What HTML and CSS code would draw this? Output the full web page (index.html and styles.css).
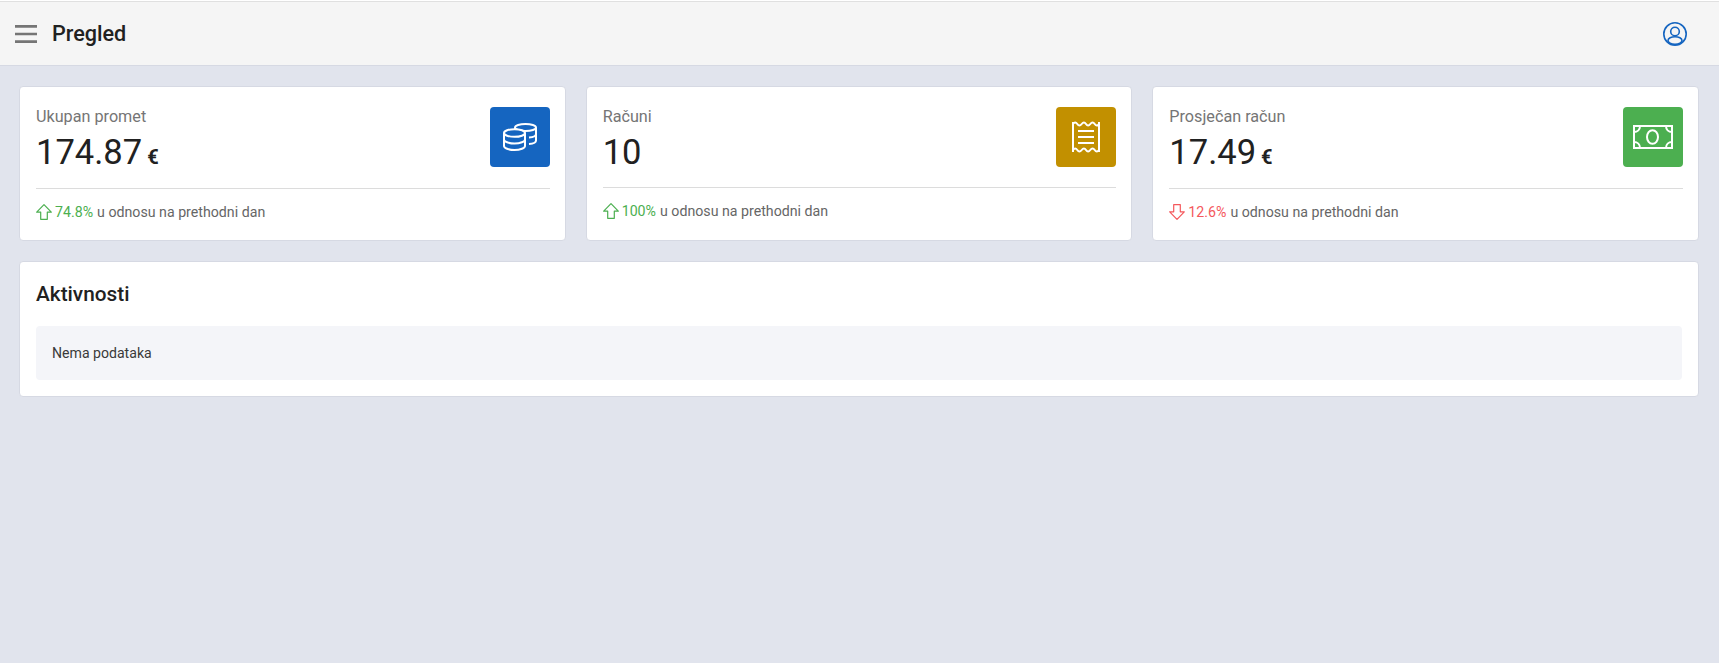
FILE: index.html
```html
<!DOCTYPE html>
<html lang="hr">
<head>
<meta charset="utf-8">
<title>Pregled</title>
<link rel="stylesheet" href="styles.css">
</head>
<body>
<header class="topbar">
  <div class="topbar-left">
    <svg class="menu-icon" width="22" height="18" viewBox="0 0 22 18"><path d="M0 1.400h22M0 9h22M0 16.600h22" stroke="#757575" stroke-width="2.700" fill="none"/></svg>
    <h1 class="title">Pregled</h1>
  </div>
  <svg class="user-icon" width="24" height="24" viewBox="0 0 24 24" fill="none" stroke="#1565c0" stroke-width="1.600"><circle cx="12" cy="12" r="11.200"/><circle cx="12" cy="9.500" r="4.300"/><ellipse cx="12" cy="18.500" rx="7" ry="3.800"/></svg>
</header>
<main class="content">
  <section class="stats">
    <article class="card stat">
      <div class="stat-head">
        <div class="stat-text">
          <div class="stat-label">Ukupan promet</div>
          <div class="stat-value">174.87<span class="unit"> €</span></div>
        </div>
        <div class="stat-icon blue">
          <svg width="34" height="28" viewBox="0 0 34 28" fill="none" stroke="#fff" stroke-width="2"><path d="M12 5v12M33 4.500v13c0 1.800-3 3.200-7 3.500M33 11c0 1.800-3 3.200-7 3.500"/><ellipse cx="22.500" cy="4.500" rx="10.500" ry="3.500"/><path fill="#1565c0" stroke="none" d="M1 10h21v14H1z"/><ellipse cx="11.500" cy="10" rx="10.500" ry="3.800" fill="#1565c0"/><path d="M1 10v13c0 2 4.700 4 10.500 4S22 25 22 23V10M1 16.500c0 2 4.700 4 10.500 4S22 18.500 22 16.500"/></svg>
        </div>
      </div>
      <div class="stat-foot">
        <svg class="arrow" width="16" height="16" viewBox="0 0 16 16" fill="none" stroke="#4caf50" stroke-width="1.200" stroke-linejoin="round"><path d="M8 .7 .7 8.200h4v7.100h6.600V8.200h4z"/></svg>
        <span class="up">74.8%</span> u odnosu na prethodni dan
      </div>
    </article>
    <article class="card stat">
      <div class="stat-head">
        <div class="stat-text">
          <div class="stat-label">Računi</div>
          <div class="stat-value">10</div>
        </div>
        <div class="stat-icon gold">
          <svg width="28" height="32" viewBox="0 0 28 32" fill="none" stroke="#fff" stroke-width="2"><path d="M1 1v30M27 1v30M1 3q2.200 -3 4.300 0t4.400 0 4.300 0 4.300 0 4.400 0 4.300 0M1 29q2.200 -3 4.300 0t4.400 0 4.300 0 4.300 0 4.400 0 4.300 0"/><path d="M6 10h16M6 16h16M6 22h16"/></svg>
        </div>
      </div>
      <div class="stat-foot">
        <svg class="arrow" width="16" height="16" viewBox="0 0 16 16" fill="none" stroke="#4caf50" stroke-width="1.200" stroke-linejoin="round"><path d="M8 .7 .7 8.200h4v7.100h6.600V8.200h4z"/></svg>
        <span class="up">100%</span> u odnosu na prethodni dan
      </div>
    </article>
    <article class="card stat">
      <div class="stat-head">
        <div class="stat-text">
          <div class="stat-label">Prosječan račun</div>
          <div class="stat-value">17.49<span class="unit"> €</span></div>
        </div>
        <div class="stat-icon green">
          <svg width="40" height="24" viewBox="0 0 40 24" fill="none" stroke="#fff" stroke-width="2"><rect x="1" y="1" width="38" height="22"/><ellipse cx="19.500" cy="12" rx="5.500" ry="6.800"/><path d="M1 7c3.500 0 6-2.500 6-6M39 7c-3.500 0-6-2.500-6-6M1 17c3.500 0 6 2.500 6 6M39 17c-3.500 0-6 2.500-6 6"/></svg>
        </div>
      </div>
      <div class="stat-foot">
        <svg class="arrow" width="16" height="16" viewBox="0 0 16 16" fill="none" stroke="#f4585c" stroke-width="1.200" stroke-linejoin="round"><path d="M8 15.300 .7 7.800h4V.7h6.600v7.100h4z"/></svg>
        <span class="down">12.6%</span> u odnosu na prethodni dan
      </div>
    </article>
  </section>
  <section class="card activity">
    <h2 class="activity-title">Aktivnosti</h2>
    <div class="empty">Nema podataka</div>
  </section>
</main>
</body>
</html>
```
FILE: styles.css
```css
* { box-sizing: border-box; }
html, body { margin: 0; height: 100%; }
body {
  background: #e1e4ed;
  font-family: Roboto, "Liberation Sans", sans-serif;
  color: #212121;
  overflow: hidden;
}
.topbar {
  height: 66px;
  background: #f5f5f5;
  border-top: 1px solid #fff;
  border-bottom: 1px solid #d6d9e3;
  box-shadow: inset 0 1px 0 #e0e0e0;
  display: flex;
  align-items: center;
  justify-content: space-between;
  padding: 1px 32px 0 15px;
}
.topbar-left { display: flex; align-items: center; gap: 15px; }
.menu-icon { display: block; }
.title { margin: 0; font-size: 21.600px; line-height: 24px; font-weight: 500; color: #212121; }
.user-icon { display: block; }
.content {
  padding: 20px 20px 20px 19px;
  display: flex;
  flex-direction: column;
  gap: 20px;
}
.stats { display: grid; grid-template-columns: repeat(3, 1fr); gap: 20px; }
.card {
  background: #fff;
  border: 1px solid #d6d9e3;
  border-radius: 4px;
}
.stat { padding: 20px 15px 0 16px; height: 155px; }
.stat-head {
  display: flex;
  justify-content: space-between;
  align-items: flex-start;
  padding-bottom: 16px;
  border-bottom: 1px solid #dcdcdc;
}
.stat-label { font-size: 16.200px; line-height: 19px; color: #757575; }
.stat-value { margin-top: 7px; font-size: 34.560px; line-height: 38px; color: #212121; }
.unit { font-size: 20px; line-height: 30px; font-weight: 700; }
.stat-icon {
  width: 60px;
  height: 60px;
  border-radius: 4px;
  display: flex;
  align-items: center;
  justify-content: center;
  flex: none;
}
.blue { background: #1565c0; }
.gold { background: #c29000; }
.green { background: #4caf50; }
.stat-foot {
  display: flex;
  align-items: center;
  gap: 3px;
  margin-top: 14px;
  font-size: 14.200px;
  line-height: 18px;
  color: #666;
}
.arrow { display: block; flex: none; }
.up { color: #4caf50; margin-right: 1px; }
.down { color: #f4585c; margin-right: 1px; }
.activity { padding: 16px; height: 136px; }
.activity-title { margin: 4px 0 0; font-size: 20.800px; line-height: 24px; font-weight: 500; color: #212121; }
.empty {
  margin-top: 20px;
  height: 54px;
  padding: 0 16px;
  background: #f4f5f9;
  border-radius: 4px;
  display: flex;
  align-items: center;
  font-size: 14.100px;
  color: #3a3a3a;
}
```
